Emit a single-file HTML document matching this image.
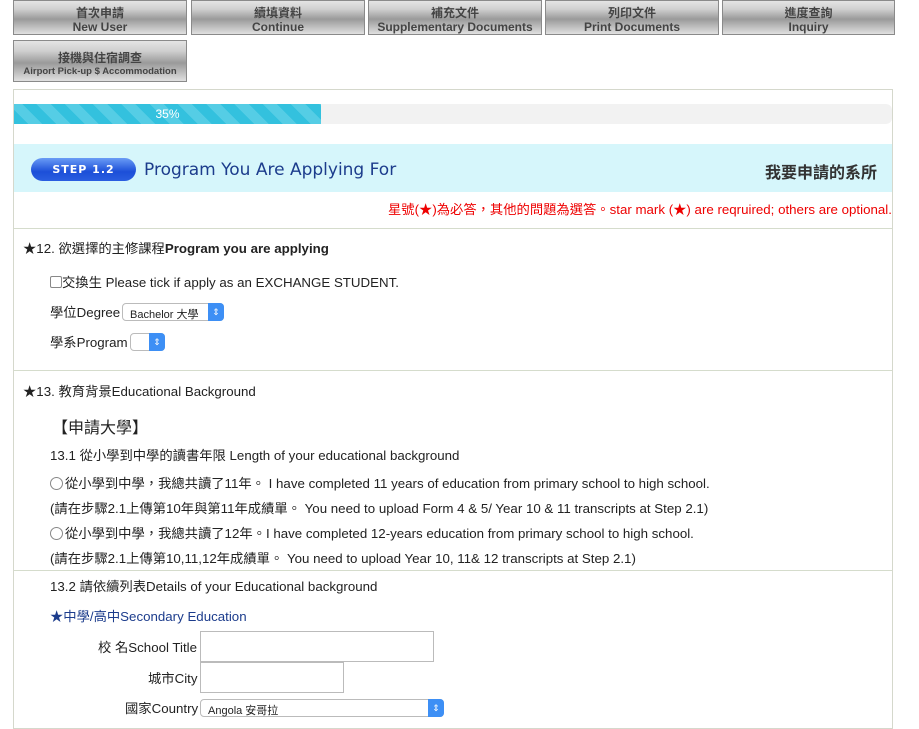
<!DOCTYPE html>
<html><head><meta charset="utf-8"><style>
body{margin:0;background:#fff;font-family:"Liberation Sans","Noto Sans CJK TC",sans-serif;color:#222;width:919px;height:722px;overflow:hidden;position:relative}
.btn{position:absolute;height:35px;width:174px;border:1px solid #8a8a8a;background:linear-gradient(#e4e4e4 0%,#cfcfcf 25%,#9a9a9a 55%,#c8c8c8 85%,#e0e0e0 100%);text-align:center;font-weight:bold;color:#444;font-size:12px;line-height:14px;box-sizing:border-box;padding-top:5px}
.btn span{display:block}
.box{position:absolute;left:13px;top:89px;width:880px;height:640px;border:1px solid #d5d8cc;box-sizing:border-box}
.a{position:absolute;font-size:13.3px;white-space:nowrap;color:#222}
.sel{position:absolute;height:18px;border:1px solid #bbb;border-radius:4px;background:#fff;font-size:11px;box-sizing:border-box;padding:2px 0 0 7px}
.sel i{position:absolute;right:-1px;top:-1px;width:16px;height:18px;background:#3d8ff5;border-radius:0 4px 4px 0;color:#fff;font-style:normal;font-size:9px;text-align:center;line-height:18px}
.inp{position:absolute;border:1px solid #bbb;background:#fff;box-sizing:border-box}
.hr{position:absolute;left:14px;width:878px;height:1px;background:#d5dccc}
.rad{display:inline-block;width:11px;height:11px;border:1px solid #888;border-radius:50%;vertical-align:-2px;margin-right:2px}
</style></head><body>
<div class="btn" style="left:13px;top:0"><span>首次申請</span><span>New User</span></div>
<div class="btn" style="left:191px;top:0"><span>續填資料</span><span>Continue</span></div>
<div class="btn" style="left:368px;top:0"><span>補充文件</span><span>Supplementary Documents</span></div>
<div class="btn" style="left:545px;top:0"><span>列印文件</span><span>Print Documents</span></div>
<div class="btn" style="left:722px;top:0;width:173px"><span>進度查詢</span><span>Inquiry</span></div>
<div class="btn" style="left:13px;top:40px;height:42px;padding-top:10px"><span>接機與住宿調查</span><span style="font-size:9.5px">Airport Pick-up $ Accommodation</span></div>
<div class="box"></div>
<div style="position:absolute;left:14px;top:104px;width:878px;height:20px;background:#f2f2f2;border-radius:0 6px 6px 0"></div>
<div style="position:absolute;left:14px;top:104px;width:307px;height:20px;background:repeating-linear-gradient(45deg,#33c1de 0 10px,#55cde5 10px 20px);color:#fff;font-size:12px;text-align:center;line-height:20px">35%</div>
<div style="position:absolute;left:14px;top:144px;width:878px;height:48px;background:#d6f6fb"></div>
<div style="position:absolute;left:31px;top:158px;width:105px;height:23px;border-radius:12px;background:linear-gradient(#6a9cf5,#1c4fd8 60%,#2a5ee0);color:#fff;font-weight:bold;font-size:11px;text-align:center;line-height:23px;letter-spacing:1px;font-family:'DejaVu Sans',sans-serif">STEP 1.2</div>
<div class="a" style="left:144px;top:160px;font-size:17px;color:#1c3c8c;font-family:'DejaVu Sans',sans-serif">Program You Are Applying For</div>
<div class="a" style="left:765px;top:159px;font-size:16px;font-weight:bold;color:#333">我要申請的系所</div>
<div class="a" style="left:388px;top:199px;color:#e00">星號(★)為必答，其他的問題為選答。star mark (★) are reqruired; others are optional.</div>
<div class="hr" style="top:228px"></div>
<div class="a" style="left:23px;top:238px">★12. 欲選擇的主修課程<b>Program you are applying</b></div>
<div class="a" style="left:50px;top:272px"><span style="display:inline-block;width:10px;height:10px;border:1px solid #888;border-radius:2px;vertical-align:-1px"></span>交換生 Please tick if apply as an EXCHANGE STUDENT.</div>
<div class="a" style="left:50px;top:302px">學位Degree</div>
<div class="sel" style="left:122px;top:303px;width:102px">Bachelor 大學<i>⇕</i></div>
<div class="a" style="left:50px;top:332px">學系Program</div>
<div class="sel" style="left:130px;top:333px;width:35px"><i>⇕</i></div>
<div class="hr" style="top:370px"></div>
<div class="a" style="left:23px;top:381px">★13. 教育背景Educational Background</div>
<div class="a" style="left:52px;top:414px;font-size:16px">【申請大學】</div>
<div class="a" style="left:50px;top:445px">13.1 從小學到中學的讀書年限 Length of your educational background</div>
<div class="a" style="left:50px;top:473px"><span class="rad"></span>從小學到中學，我總共讀了11年。 I have completed 11 years of education from primary school to high school.</div>
<div class="a" style="left:50px;top:498px">(請在步驟2.1上傳第10年與第11年成績單。 You need to upload Form 4 &amp; 5/ Year 10 &amp; 11 transcripts at Step 2.1)</div>
<div class="a" style="left:50px;top:523px"><span class="rad"></span>從小學到中學，我總共讀了12年。I have completed 12-years education from primary school to high school.</div>
<div class="a" style="left:50px;top:548px">(請在步驟2.1上傳第10,11,12年成績單。 You need to upload Year 10, 11&amp; 12 transcripts at Step 2.1)</div>
<div class="hr" style="top:570px"></div>
<div class="a" style="left:50px;top:576px">13.2 請依續列表Details of your Educational background</div>
<div class="a" style="left:50px;top:606px;color:#1c3c8c">★中學/高中Secondary Education</div>
<div class="a" style="left:98px;top:637px">校 名School Title</div>
<div class="inp" style="left:200px;top:631px;width:234px;height:31px"></div>
<div class="a" style="left:148px;top:668px">城市City</div>
<div class="inp" style="left:200px;top:662px;width:144px;height:31px"></div>
<div class="a" style="left:125px;top:698px">國家Country</div>
<div class="sel" style="left:200px;top:699px;width:244px;height:18px">Angola 安哥拉<i>⇕</i></div>
</body></html>
